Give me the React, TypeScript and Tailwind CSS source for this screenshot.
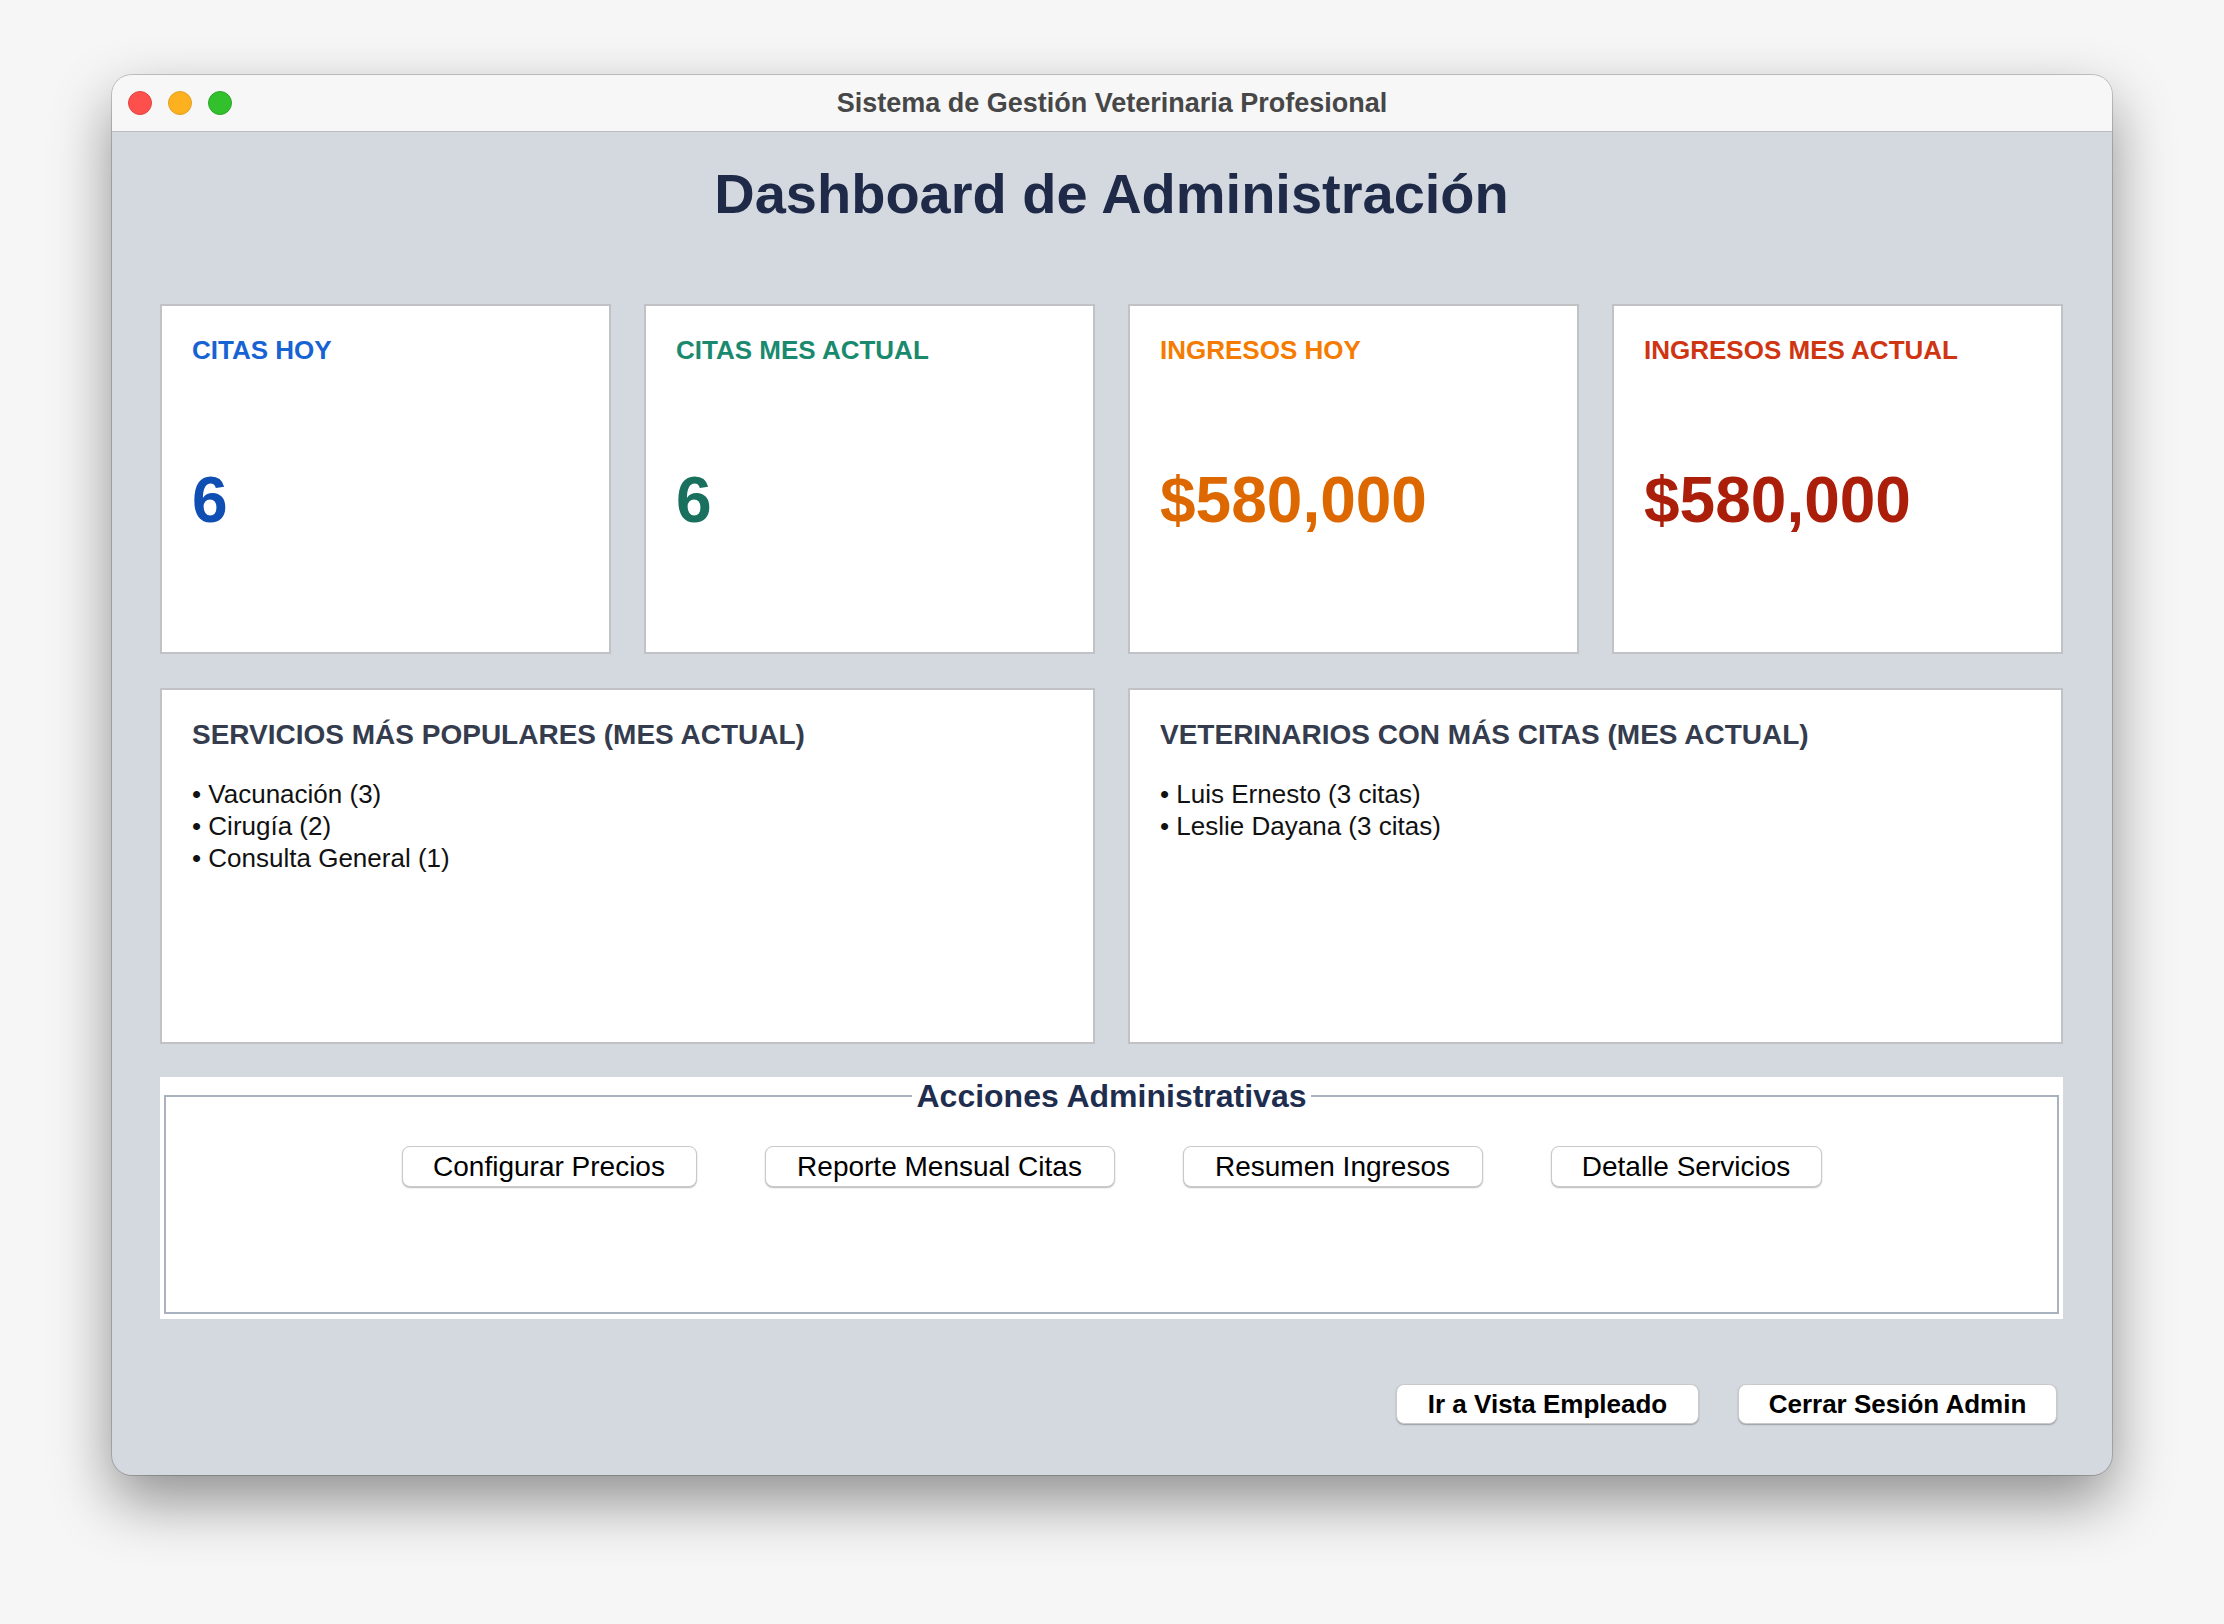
import React from "react";

type StatProps = { label: string; value: string; labelColor: string; valueColor: string };

function StatCard({ label, value, labelColor, valueColor }: StatProps) {
  return (
    <div className="h-[350px] border-2 border-[#c0c2c5] bg-white px-[30px] pt-[30px]">
      <div className={`text-[26px] font-bold leading-[28px] ${labelColor}`}>{label}</div>
      <div className={`mt-[104px] text-[64px] font-bold leading-[64px] ${valueColor}`}>{value}</div>
    </div>
  );
}

function ListCard({ title, items }: { title: string; items: string[] }) {
  return (
    <div className="col-span-2 h-[356px] border-2 border-[#c0c2c5] bg-white px-[30px] pt-[30px]">
      <div className="text-[28px] font-bold leading-[30px] text-[#343c4e]">{title}</div>
      <div className="mt-[28px] text-[26px] leading-[32px] text-[#111111]">
        {items.map((it) => (
          <div key={it}>• {it}</div>
        ))}
      </div>
    </div>
  );
}

function ActionButton({ label, width }: { label: string; width: string }) {
  return (
    <button
      className={`flex h-[41px] ${width} items-center justify-center rounded-[8px] border border-[#c9c9c9] bg-white text-[28px] leading-none text-black shadow-[0_1px_1.5px_rgba(0,0,0,0.28)]`}
    >
      {label}
    </button>
  );
}

export default function App() {
  return (
    <div className="min-h-[1624px] w-[2224px] bg-[#f6f6f6] pl-[112px] pt-[75px] font-['Liberation_Sans',Arial,sans-serif]">
      <div className="flex h-[1400px] w-[2000px] flex-col overflow-hidden rounded-[20px] bg-[#d4d9e0] shadow-[0_26px_60px_rgba(0,0,0,0.42),0_0_0_1px_rgba(0,0,0,0.18)]">
        {/* Title bar */}
        <div className="grid h-[57px] grid-cols-[1fr_auto_1fr] items-center border-b border-[#bdbdbd] bg-[#f7f7f7]">
          <div className="flex items-center gap-[16px] pl-[16px]">
            <span className="h-[24px] w-[24px] rounded-full border border-[#e0443e] bg-[#fd4f4c]" />
            <span className="h-[24px] w-[24px] rounded-full border border-[#dea123] bg-[#fdb11f]" />
            <span className="h-[24px] w-[24px] rounded-full border border-[#2aa52a] bg-[#32c12c]" />
          </div>
          <div className="text-[27px] font-bold leading-none text-[#474747]">
            Sistema de Gestión Veterinaria Profesional
          </div>
          <div />
        </div>

        {/* Content */}
        <div className="flex flex-col pl-[48px] pr-[49px] pt-[34px]">
          <h1 className="text-center text-[56px] font-bold leading-[56px] text-[#1e2a47]">
            Dashboard de Administración
          </h1>

          <div className="mt-[82px] grid grid-cols-4 gap-x-[33px] gap-y-[34px]">
            <StatCard label="CITAS HOY" value="6" labelColor="text-[#1763d3]" valueColor="text-[#0f4fb4]" />
            <StatCard label="CITAS MES ACTUAL" value="6" labelColor="text-[#1a8a6f]" valueColor="text-[#19705d]" />
            <StatCard label="INGRESOS HOY" value="$580,000" labelColor="text-[#f57c00]" valueColor="text-[#dd6800]" />
            <StatCard label="INGRESOS MES ACTUAL" value="$580,000" labelColor="text-[#cf3511]" valueColor="text-[#aa1e0a]" />
            <ListCard
              title="SERVICIOS MÁS POPULARES (MES ACTUAL)"
              items={["Vacunación (3)", "Cirugía (2)", "Consulta General (1)"]}
            />
            <ListCard
              title="VETERINARIOS CON MÁS CITAS (MES ACTUAL)"
              items={["Luis Ernesto (3 citas)", "Leslie Dayana (3 citas)"]}
            />
          </div>

          <div className="mt-[33px] h-[242px] bg-white px-[4px] pt-[3px]">
            <fieldset className="h-[234px] border-2 border-[#a9b3bf]">
              <legend className="mx-auto px-[4px] text-[32px] font-bold leading-[32px] text-[#1f2d4f]">
                Acciones Administrativas
              </legend>
              <div className="mt-[34px] flex justify-center gap-[68px]">
                <ActionButton label="Configurar Precios" width="w-[295px]" />
                <ActionButton label="Reporte Mensual Citas" width="w-[350px]" />
                <ActionButton label="Resumen Ingresos" width="w-[300px]" />
                <ActionButton label="Detalle Servicios" width="w-[271px]" />
              </div>
            </fieldset>
          </div>

          <div className="mt-[65px] flex justify-end gap-[39px] pr-[6px]">
            <button className="flex h-[40px] w-[303px] items-center justify-center rounded-[8px] border border-[#c9c9c9] bg-white text-[26px] font-bold leading-none text-black shadow-[0_1px_1.5px_rgba(0,0,0,0.28)]">
              Ir a Vista Empleado
            </button>
            <button className="flex h-[40px] w-[319px] items-center justify-center rounded-[8px] border border-[#c9c9c9] bg-white text-[26px] font-bold leading-none text-black shadow-[0_1px_1.5px_rgba(0,0,0,0.28)]">
              Cerrar Sesión Admin
            </button>
          </div>
        </div>
      </div>
    </div>
  );
}
